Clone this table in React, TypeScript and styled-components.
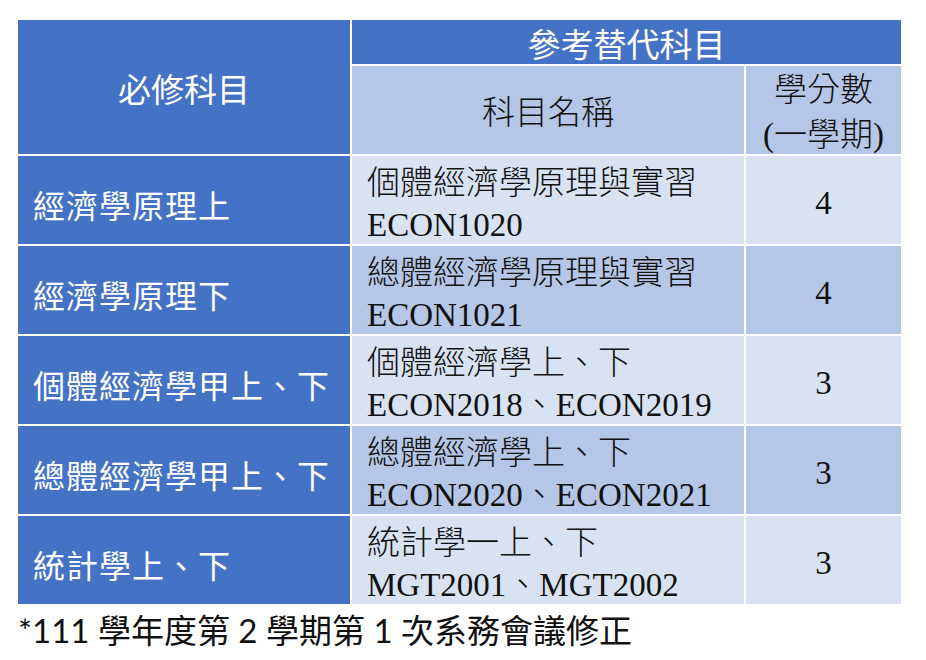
import styled, { createGlobalStyle } from "styled-components";

const GlobalStyle = createGlobalStyle`
  html, body {
    margin: 0;
    padding: 0;
    background: #ffffff;
  }
`;

type Row = {
  required: string;
  name: string;
  code: string;
  credits: string;
  shade: "light" | "dark";
};

const rows: Row[] = [
  { required: "經濟學原理上", name: "個體經濟學原理與實習", code: "ECON1020", credits: "4", shade: "light" },
  { required: "經濟學原理下", name: "總體經濟學原理與實習", code: "ECON1021", credits: "4", shade: "dark" },
  { required: "個體經濟學甲上、下", name: "個體經濟學上、下", code: "ECON2018、ECON2019", credits: "3", shade: "light" },
  { required: "總體經濟學甲上、下", name: "總體經濟學上、下", code: "ECON2020、ECON2021", credits: "3", shade: "dark" },
  { required: "統計學上、下", name: "統計學一上、下", code: "MGT2001、MGT2002", credits: "3", shade: "light" }
];

const shadeColor = {
  light: "#d9e2f3",
  dark: "#b4c7e7"
};

const Page = styled.div`
  padding: 20px 0 0 18px;
  width: 926px;
  height: 660px;
  box-sizing: border-box;
`;

const Table = styled.div`
  display: grid;
  grid-template-columns: 332px 392px 155px;
  grid-template-rows: 44px repeat(6, 88px);
  gap: 2px;
  width: 883px;
  background: #ffffff;
`;

const HeadCell = styled.div<{ $span?: string; $rows?: string }>`
  grid-column: ${(p) => p.$span ?? "auto"};
  grid-row: ${(p) => p.$rows ?? "auto"};
  background: #4472c4;
  color: #ffffff;
  display: flex;
  align-items: center;
  justify-content: center;
  font-family: "Noto Sans CJK TC", "Liberation Sans", sans-serif;
  font-size: 33px;
  line-height: 1;
  padding-top: 2px;
  box-sizing: border-box;
`;

const SubHeadCell = styled.div`
  background: #b4c7e7;
  color: #111111;
  display: flex;
  flex-direction: column;
  align-items: center;
  justify-content: center;
  font-family: "Liberation Serif", "Noto Sans CJK TC", serif;
  font-size: 33px;
  line-height: 45px;
  font-weight: 300;
  padding-top: 6px;
  box-sizing: border-box;
`;

const RequiredCell = styled.div`
  background: #4472c4;
  color: #ffffff;
  display: flex;
  align-items: center;
  padding-left: 15px;
  padding-top: 8px;
  box-sizing: border-box;
  font-family: "Noto Sans CJK TC", "Liberation Sans", sans-serif;
  font-size: 32px;
  letter-spacing: 1px;
`;

const NameCell = styled.div<{ $shade: "light" | "dark" }>`
  background: ${(p) => shadeColor[p.$shade]};
  color: #111111;
  display: flex;
  flex-direction: column;
  justify-content: center;
  padding-left: 15px;
  padding-top: 8px;
  box-sizing: border-box;
  font-family: "Liberation Serif", "Noto Sans CJK TC", serif;
  font-size: 33px;
  line-height: 42px;
  font-weight: 300;
  white-space: nowrap;
`;

const CreditCell = styled.div<{ $shade: "light" | "dark" }>`
  background: ${(p) => shadeColor[p.$shade]};
  color: #111111;
  display: flex;
  align-items: center;
  justify-content: center;
  padding-top: 6px;
  box-sizing: border-box;
  font-family: "Liberation Serif", serif;
  font-size: 33px;
`;

const Footnote = styled.div`
  margin-top: 7px;
  font-family: "Lato", "Noto Sans CJK TC", sans-serif;
  font-size: 33px;
  line-height: 38px;
  color: #111111;
`;

export default function App() {
  return (
    <>
      <GlobalStyle />
      <Page>
        <Table>
          <HeadCell $rows="1 / span 2">必修科目</HeadCell>
          <HeadCell $span="2 / span 2">參考替代科目</HeadCell>
          <SubHeadCell>科目名稱</SubHeadCell>
          <SubHeadCell>
            <span>學分數</span>
            <span>(一學期)</span>
          </SubHeadCell>
          {rows.map((row) => (
            <Cells key={row.code} row={row} />
          ))}
        </Table>
        <Footnote>*111 學年度第 2 學期第 1 次系務會議修正</Footnote>
      </Page>
    </>
  );
}

function Cells({ row }: { row: Row }) {
  return (
    <>
      <RequiredCell>{row.required}</RequiredCell>
      <NameCell $shade={row.shade}>
        <span>{row.name}</span>
        <span>{row.code}</span>
      </NameCell>
      <CreditCell $shade={row.shade}>{row.credits}</CreditCell>
    </>
  );
}
